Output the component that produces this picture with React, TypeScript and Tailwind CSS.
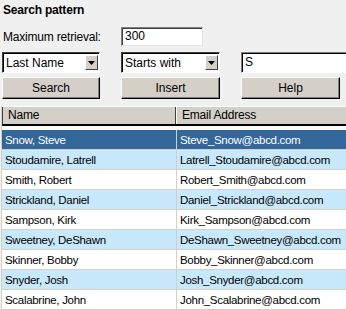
import React from 'react'

const rows = [
  ['Snow, Steve', 'Steve_Snow@abcd.com'],
  ['Stoudamire, Latrell', 'Latrell_Stoudamire@abcd.com'],
  ['Smith, Robert', 'Robert_Smith@abcd.com'],
  ['Strickland, Daniel', 'Daniel_Strickland@abcd.com'],
  ['Sampson, Kirk', 'Kirk_Sampson@abcd.com'],
  ['Sweetney, DeShawn', 'DeShawn_Sweetney@abcd.com'],
  ['Skinner, Bobby', 'Bobby_Skinner@abcd.com'],
  ['Snyder, Josh', 'Josh_Snyder@abcd.com'],
  ['Scalabrine, John', 'John_Scalabrine@abcd.com'],
]

const Select = ({ value }: { value: string }) => (
  <div className="h-[21px] flex items-center bg-white border border-t-[#404040] border-l-[#404040] border-r-[#ffffff] border-b-[#ffffff] shadow-[inset_1px_1px_0_#000]">
    <span className="flex-1 pl-[3px] pt-[1px] leading-[19px] text-[12px] whitespace-nowrap">{value}</span>
    <div className="w-[13px] h-[15px] mr-[1px] bg-[#d4d0c8] flex items-center justify-center border border-t-[#ffffff] border-l-[#ffffff] border-r-[#404040] border-b-[#404040]">
      <svg width="7" height="4" viewBox="0 0 7 4">
        <path d="M0 0h7L3.5 4z" fill="#000" />
      </svg>
    </div>
  </div>
)

const Button = ({ label }: { label: string }) => (
  <button className="h-[22px] w-full bg-[#d4d0c8] text-[12px] leading-[18px] border border-t-[#ffffff] border-l-[#ffffff] border-r-[#000] border-b-[#000] shadow-[inset_-1px_-1px_0_#808080]">
    {label}
  </button>
)

export default function App() {
  return (
    <div className="w-[346px] h-[310px] overflow-hidden bg-[#f0f0f0] text-black font-['Liberation_Sans',Arial,sans-serif] text-[11px]">
      <div className="h-[27px] pl-[3px] pt-[3px] text-[12px] font-bold leading-[14px] tracking-[-0.2px]">
        Search pattern
      </div>

      <div className="grid grid-cols-[98px_99px_110px] gap-x-[21px] pl-[2px]">
        <div className="h-[19px] flex items-center pl-[1px] text-[12px] tracking-[-0.2px] whitespace-nowrap">Maximum retrieval:</div>
        <div className="w-[82px] h-[19px] bg-white border border-t-[#808080] border-l-[#808080] border-r-[#e4e4e4] border-b-[#e4e4e4] shadow-[inset_1px_1px_0_#404040] pl-[3px] text-[12px] leading-[17px]">
          300
        </div>
        <div />
      </div>

      <div className="grid grid-cols-[98px_99px_110px] gap-x-[21px] pl-[2px] mt-[6px]">
        <Select value="Last Name" />
        <Select value="Starts with" />
        <div className="h-[21px] bg-white border border-t-[#808080] border-l-[#808080] border-r-[#ffffff] border-b-[#ffffff] shadow-[inset_1px_1px_0_#000] pl-[3px] text-[12px] leading-[19px]">
          S
        </div>
      </div>

      <div className="grid grid-cols-[98px_99px_99px] gap-x-[21px] pl-[2px] mt-[4px]">
        <Button label="Search" />
        <Button label="Insert" />
        <Button label="Help" />
      </div>

      <div className="mt-[7px] ml-[1px] border-l border-[#d4d0c8]">
        <div className="flex h-[18px] bg-[#d4d0c8] border-t border-white">
          <div className="w-[174px] pl-[5px] border-l border-r border-l-[#404040] border-r-[#404040] leading-[17px] text-[12px] tracking-[-0.2px]">Name</div>
          <div className="flex-1 pl-[5px] border-l border-white leading-[17px] text-[12px] tracking-[-0.2px]">Email Address</div>
        </div>
        <div className="h-[2px] bg-black" />
        <div className="h-[4px] bg-[#fafafa]" />
        {rows.map(([name, email], i) => {
          const bg = i === 0 ? 'bg-[#336699] text-white' : i % 2 === 1 ? 'bg-[#c8e8fc]' : 'bg-white'
          return (
            <div key={name} className={`flex h-[20px] border-b border-[#d4d0c8] text-[11.5px] tracking-[-0.3px] ${bg}`}>
              <div className="w-[175px] pl-[3px] pt-[1px] leading-[19px] border-r border-[#d4d0c8]">{name}</div>
              <div className="flex-1 pl-[3px] pt-[1px] leading-[19px]">{email}</div>
            </div>
          )
        })}
      </div>
    </div>
  )
}
